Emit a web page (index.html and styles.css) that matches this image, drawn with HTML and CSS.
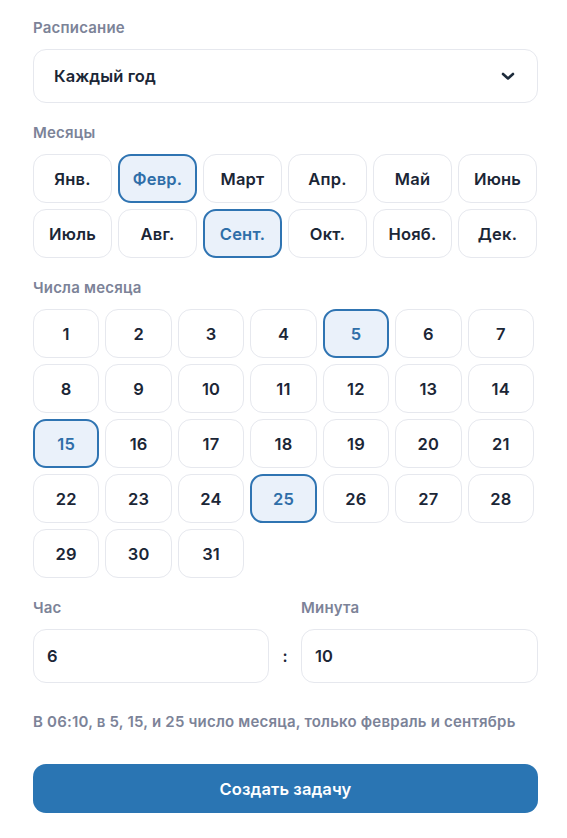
FILE: index.html
```html
<!DOCTYPE html>
<html lang="ru">
<head>
<meta charset="utf-8">
<link rel="stylesheet" href="styles.css">
</head>
<body>
<main class="form">
  <section class="field">
    <div class="label">Расписание</div>
    <div class="select">
      <span>Каждый год</span>
      <svg class="chev" width="14" height="10" viewBox="0 0 14 10"><path d="M2 3 L7 7.5 L12 3" fill="none" stroke="#1d2b3b" stroke-width="2.6" stroke-linecap="round" stroke-linejoin="round"/></svg>
    </div>
  </section>

  <section class="field">
    <div class="label">Месяцы</div>
    <div class="months">
      <button class="chip">Янв.</button>
      <button class="chip on">Февр.</button>
      <button class="chip">Март</button>
      <button class="chip">Апр.</button>
      <button class="chip">Май</button>
      <button class="chip">Июнь</button>
      <button class="chip">Июль</button>
      <button class="chip">Авг.</button>
      <button class="chip on">Сент.</button>
      <button class="chip">Окт.</button>
      <button class="chip">Нояб.</button>
      <button class="chip">Дек.</button>
    </div>
  </section>

  <section class="field">
    <div class="label">Числа месяца</div>
    <div class="days">
      <button class="chip">1</button><button class="chip">2</button><button class="chip">3</button><button class="chip">4</button><button class="chip on">5</button><button class="chip">6</button><button class="chip">7</button>
      <button class="chip">8</button><button class="chip">9</button><button class="chip">10</button><button class="chip">11</button><button class="chip">12</button><button class="chip">13</button><button class="chip">14</button>
      <button class="chip on">15</button><button class="chip">16</button><button class="chip">17</button><button class="chip">18</button><button class="chip">19</button><button class="chip">20</button><button class="chip">21</button>
      <button class="chip">22</button><button class="chip">23</button><button class="chip">24</button><button class="chip on">25</button><button class="chip">26</button><button class="chip">27</button><button class="chip">28</button>
      <button class="chip">29</button><button class="chip">30</button><button class="chip">31</button>
    </div>
  </section>

  <section class="time">
    <div class="tcol">
      <div class="label">Час</div>
      <div class="input">6</div>
    </div>
    <div class="colon">:</div>
    <div class="tcol">
      <div class="label">Минута</div>
      <div class="input">10</div>
    </div>
  </section>

  <p class="hint">В 06:10, в 5, 15, и 25 число месяца, только февраль и сентябрь</p>

  <button class="submit">Создать задачу</button>
</main>
</body>
</html>
```

FILE: styles.css
```css
* { box-sizing: border-box; }
html, body { margin: 0; background: #ffffff; }
body {
  font-family: "Inter", "Noto Sans", sans-serif;
  color: #1b2636;
  padding: 18px 29px 0 33px;
}
.form { display: flex; flex-direction: column; width: 505px; }
.field { display: flex; flex-direction: column; margin-bottom: 20px; }
.label {
  font-size: 15px;
  font-weight: 600;
  color: #7c8398;
  line-height: 20px;
  margin-bottom: 11px;
  letter-spacing: 0.2px;
}
.select {
  height: 54px;
  border: 1px solid #e6e8ee;
  border-radius: 13px;
  display: flex;
  align-items: center;
  justify-content: space-between;
  padding: 0 22px 0 20px;
  font-size: 16.5px;
  font-weight: 600;
  letter-spacing: 0.1px;
}
.chev { display: block; }
.months {
  display: grid;
  grid-template-columns: repeat(6, 1fr);
  gap: 6px;
  width: 504px;
}
.days {
  display: grid;
  grid-template-columns: repeat(7, 1fr);
  gap: 6px;
  width: 501px;
}
.chip {
  height: 49px;
  border: 1px solid #e6e8ee;
  border-radius: 13px;
  background: #fff;
  font-family: inherit;
  font-size: 16.5px;
  font-weight: 600;
  color: #1b2636;
  padding: 0;
  display: flex;
  align-items: center;
  justify-content: center;
  letter-spacing: 0.2px;
}
.chip.on {
  background: #eaf1fa;
  border: 2px solid #2f74b2;
  color: #2f6ea8;
}
.time {
  display: flex;
  align-items: flex-end;
  width: 505px;
}
.tcol { display: flex; flex-direction: column; width: 236px; }
.tcol:last-child { width: 237px; }
.colon {
  width: 32px;
  height: 54px;
  display: flex;
  align-items: center;
  justify-content: center;
  font-size: 16px;
  font-weight: 600;
}
.input {
  height: 54px;
  border: 1px solid #e6e8ee;
  border-radius: 13px;
  display: flex;
  align-items: center;
  padding: 0 13px;
  font-size: 16.5px;
  font-weight: 600;
}
.hint {
  margin: 29px 0 0;
  font-size: 15px;
  font-weight: 600;
  color: #7c8398;
  line-height: 20px;
  letter-spacing: 0.2px;
}
.submit {
  margin-top: 32px;
  height: 49px;
  border: none;
  border-radius: 13px;
  background: #2a75b3;
  color: #fff;
  font-family: inherit;
  font-size: 16.5px;
  font-weight: 600;
  letter-spacing: 0.1px;
}
```
